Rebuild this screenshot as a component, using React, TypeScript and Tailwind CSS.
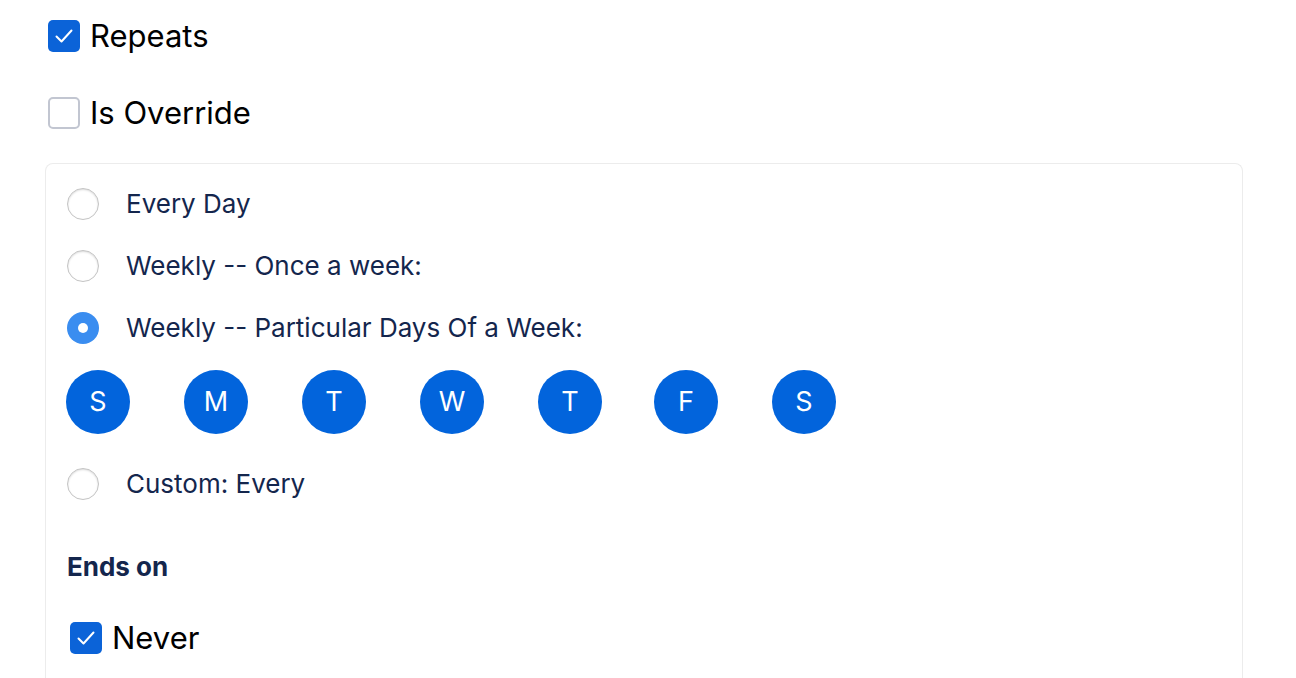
import { useState } from "react";

const days = ["S", "M", "T", "W", "T", "F", "S"];

function CheckBox({ checked, label }: { checked: boolean; label: string }) {
  return (
    <label className="flex items-center gap-[10px] cursor-pointer">
      <span
        className={
          checked
            ? "flex h-8 w-8 items-center justify-center rounded-[5px] bg-[#0b63d8]"
            : "flex h-8 w-8 items-center justify-center rounded-[5px] border-2 border-[#c2c6d1] bg-white"
        }
      >
        {checked && (
          <svg width="22" height="22" viewBox="0 0 22 22" fill="none">
            <path d="M3.5 11.5 L8.5 16.5 L18.5 5.5" stroke="white" strokeWidth="2" strokeLinecap="round" strokeLinejoin="round" />
          </svg>
        )}
      </span>
      <span className="-mt-[2px] text-[31px] leading-none text-black">{label}</span>
    </label>
  );
}

function Radio({ checked, label }: { checked: boolean; label: string }) {
  return (
    <div className="flex h-8 items-center gap-[27px]">
      {checked ? (
        <span className="flex h-8 w-8 items-center justify-center rounded-full bg-[#3a8df0]">
          <span className="h-[10px] w-[10px] rounded-full bg-white" />
        </span>
      ) : (
        <span className="h-8 w-8 rounded-full border border-[#c4c4c4] bg-white shadow-[inset_0_1px_2px_rgba(0,0,0,0.15)]" />
      )}
      <span className="text-[26px] leading-none text-[#14264d]">{label}</span>
    </div>
  );
}

export default function App() {
  const [selected] = useState(2);
  const options = ["Every Day", "Weekly -- Once a week:", "Weekly -- Particular Days Of a Week:"];

  return (
    <div className="min-h-[678px] bg-white pl-[48px] pt-[20px] font-['Inter','Noto_Sans',sans-serif]">
      <div className="flex flex-col gap-[45px]">
        <CheckBox checked label="Repeats" />
        <CheckBox checked={false} label="Is Override" />
      </div>

      <div className="mt-[34px] -ml-[3px] w-[1198px] rounded-t-lg border border-b-0 border-[#ececec] pl-[21px] pt-[24px] pb-6">
        <div className="flex flex-col gap-[30px]">
          {options.map((o, i) => (
            <Radio key={o} checked={i === selected} label={o} />
          ))}
        </div>

        <div className="mt-[26px] -ml-[1px] flex">
          {days.map((d, i) => (
            <span
              key={i}
              className={
                (i === 0 ? "" : i === 5 ? "ml-[52px] " : "ml-[54px] ") +
                "flex h-16 w-16 items-center justify-center rounded-full bg-[#0264dc] text-[27px] text-white"
              }
            >
              {d}
            </span>
          ))}
        </div>

        <div className="mt-[34px]">
          <Radio checked={false} label="Custom: Every" />
        </div>

        <h3 className="mt-[54px] text-[26px] font-bold leading-none text-[#14264d]">Ends on</h3>

        <div className="mt-[42px] pl-[3px]">
          <CheckBox checked label="Never" />
        </div>
      </div>
    </div>
  );
}
